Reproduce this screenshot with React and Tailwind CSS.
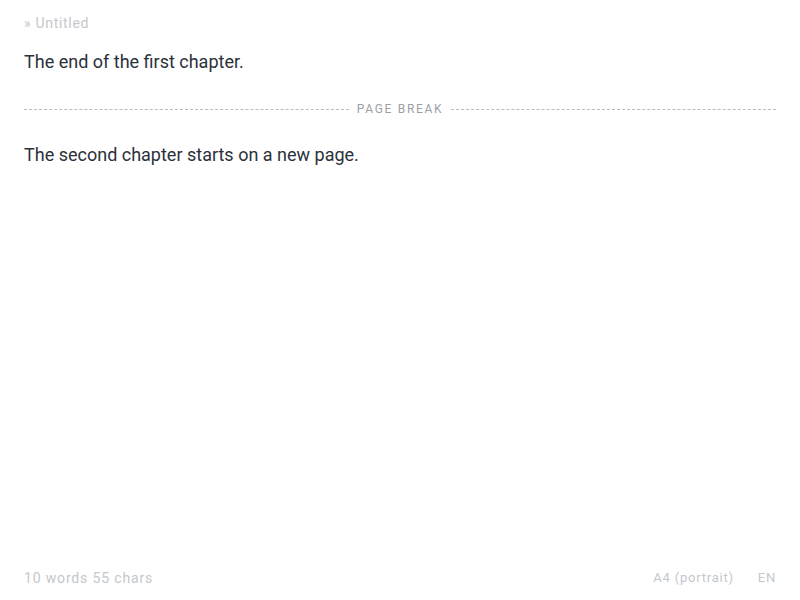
import React from "react";

const App = () => {
  return (
    <div className="flex h-[600px] w-[800px] flex-col bg-white px-6 font-['Roboto','Noto_Sans',sans-serif]">
      <div className="pt-[13px] text-sm tracking-[0.05em] text-[#c4c7cd]">» Untitled</div>

      <div className="flex-1">
        <p className="mt-[15px] text-lg leading-[28px] text-[#2b313a]">
          The end of the first chapter.
        </p>

        <div className="mt-[25px] flex items-center gap-2">
          <div className="flex-1 border-t border-dashed border-[#b8bcc3]" />
          <span className="text-xs tracking-[0.14em] text-[#9ca0a8]">PAGE BREAK</span>
          <div className="flex-1 border-t border-dashed border-[#b8bcc3]" />
        </div>

        <p className="mt-[24px] text-lg leading-[28px] text-[#2b313a]">
          The second chapter starts on a new page.
        </p>
      </div>

      <div className="flex items-center justify-between pb-[12px] text-sm text-[#c4c7cd]">
        <span className="tracking-[0.06em]">10 words 55 chars</span>
        <div className="flex items-center gap-6 text-[13px] tracking-[0.06em]">
          <span>A4 (portrait)</span>
          <span>EN</span>
        </div>
      </div>
    </div>
  );
};

export default App;
